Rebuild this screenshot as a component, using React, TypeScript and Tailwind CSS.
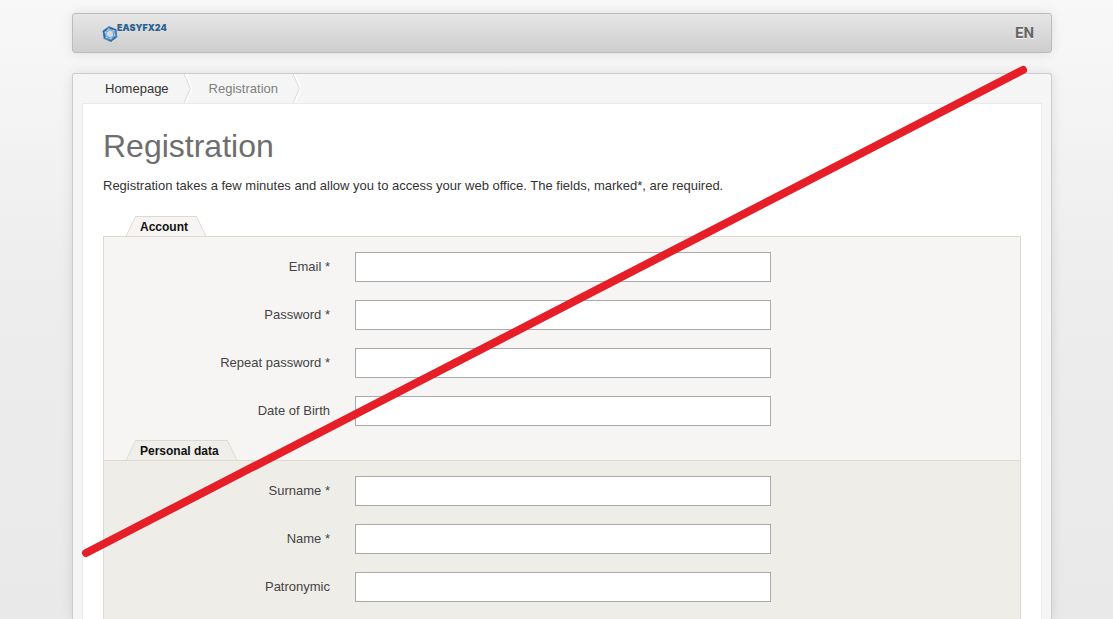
import React from "react";

type Field = { id: string; label: string; type: string };

const accountFields: Field[] = [
  { id: "email", label: "Email *", type: "email" },
  { id: "password", label: "Password *", type: "password" },
  { id: "repeat-password", label: "Repeat password *", type: "password" },
  { id: "birth", label: "Date of Birth", type: "text" },
];

const personalFields: Field[] = [
  { id: "surname", label: "Surname *", type: "text" },
  { id: "name", label: "Name *", type: "text" },
  { id: "patronymic", label: "Patronymic", type: "text" },
];

function Logo() {
  return (
    <a href="#" className="flex items-start">
      <svg viewBox="0 0 32 32" className="mt-1 h-4 w-4" fill="none" aria-hidden="true">
        {[0, 60, 120, 180, 240, 300].map((angle, i) => (
          <g key={angle} transform={`rotate(${angle} 16 16)`}>
            <path d="M5 11 14 2l8 3.500" stroke={i % 2 ? "#2a6ba8" : "#3b86c6"} strokeWidth="3.500" />
            <path d="M9 13l7-6 6 3" stroke={i % 2 ? "#8dbbe0" : "#5c9bd0"} strokeWidth="2" />
          </g>
        ))}
      </svg>
      <span className="-ml-px font-['Inter',sans-serif] text-[9px] leading-3 font-black text-[#2c6290]">
        EASYFX24
      </span>
    </a>
  );
}

function Chevron() {
  return (
    <svg viewBox="0 0 8 29" className="h-[29px] w-2" fill="none" aria-hidden="true">
      <path d="M1.500 0 7.500 14.500 1.500 29" stroke="#fff" strokeWidth="2" />
      <path d="M0 0 6.500 14.500 0 29" stroke="#d9d9d9" />
    </svg>
  );
}

function Tab({ title, fill }: { title: string; fill: string }) {
  return (
    <div className="-mb-px flex h-[21px]">
      <svg viewBox="0 0 10 21" className="h-[21px] w-2.5" aria-hidden="true">
        <path d="M0 21 10 0v21z" fill={fill} />
        <path d="M0 20.500 9.500 .5h1" fill="none" stroke="#dddbd0" />
      </svg>
      <h2
        className="border-t border-[#dddbd0] pr-2 pl-1 text-xs leading-5 font-bold text-[#111]"
        style={{ backgroundColor: fill }}
      >
        {title}
      </h2>
      <svg viewBox="0 0 10 21" className="h-[21px] w-2.5" aria-hidden="true">
        <path d="M10 21 0 0v21z" fill={fill} />
        <path d="M10 20.500 .5 .5h-1" fill="none" stroke="#dddbd0" />
      </svg>
    </div>
  );
}

function Fields({ fields }: { fields: Field[] }) {
  return (
    <div className="flex flex-col gap-[18px]">
      {fields.map((f) => (
        <div key={f.id} className="grid grid-cols-[226px_minmax(0,416px)] gap-x-[25px]">
          <label htmlFor={f.id} className="text-right leading-[30px] text-[#444]">
            {f.label}
          </label>
          <input
            id={f.id}
            type={f.type}
            className="h-[30px] w-full border border-[#aaa] bg-white px-2 outline-none focus:border-[#666]"
          />
        </div>
      ))}
    </div>
  );
}

export default function App() {
  return (
    <div className="relative flex min-h-screen flex-col bg-linear-to-b from-[#f8f8f8] via-[#ededed] via-45% to-[#e9e9e9] pt-[13px] pr-[61px] pl-[72px] font-['Liberation_Sans',Arial,sans-serif] text-[13px] text-[#333]">
      <header className="flex h-10 justify-between rounded-[3px] border border-[#bcbcbc] bg-linear-to-b from-[#e6e6e6] to-[#cecece] pr-[17px] pl-[29px] shadow-[0_0_12px_rgba(0,0,0,0.1)]">
        <div className="pt-2">
          <Logo />
        </div>
        <button
          type="button"
          className="font-['Roboto',sans-serif] text-[15px] font-bold text-[#666] text-shadow-[0_1px_0_#fff]"
        >
          EN
        </button>
      </header>

      <main className="mt-5 flex flex-1 flex-col rounded-t-[3px] border border-b-0 border-[#cdcdcd] bg-[#f5f5f5] px-[9px] shadow-[0_0_12px_rgba(0,0,0,0.1)]">
        <nav aria-label="Breadcrumb" className="flex h-[29px] items-center pl-[23px]">
          <a href="#" className="pr-[15px] text-[#333]">
            Homepage
          </a>
          <Chevron />
          <span className="pr-[15px] pl-[17px] text-[#808080]">Registration</span>
          <Chevron />
        </nav>

        <div className="flex flex-1 flex-col border-x border-t border-[#ebebeb] bg-white px-5 pt-[22px]">
          <h1 className="text-[32px] leading-10 text-[#6e6e6e]">Registration</h1>
          <p className="mt-2.5 mb-5 leading-5">
            Registration takes a few minutes and allow you to access your web office. The fields,
            marked*, are required.
          </p>

          <form className="flex flex-1 flex-col">
            <div className="pl-[23px]">
              <Tab title="Account" fill="#f6f5f3" />
            </div>
            <section className="border-x border-t border-[#dddbd0] bg-[#f6f5f3] pt-[15px]">
              <Fields fields={accountFields} />
              <div className="pt-3.5 pl-[22px]">
                <Tab title="Personal data" fill="#efeeea" />
              </div>
            </section>
            <section className="flex-1 border-x border-t border-[#dddbd0] bg-[#eeede8] pt-[15px] pb-4">
              <Fields fields={personalFields} />
            </section>
          </form>
        </div>
      </main>

      <svg
        viewBox="0 0 1113 619"
        className="pointer-events-none absolute top-0 left-0 w-full"
        aria-hidden="true"
      >
        <path d="M86 553 1023 70" stroke="#e61e27" strokeWidth="8" strokeLinecap="round" />
      </svg>
    </div>
  );
}
